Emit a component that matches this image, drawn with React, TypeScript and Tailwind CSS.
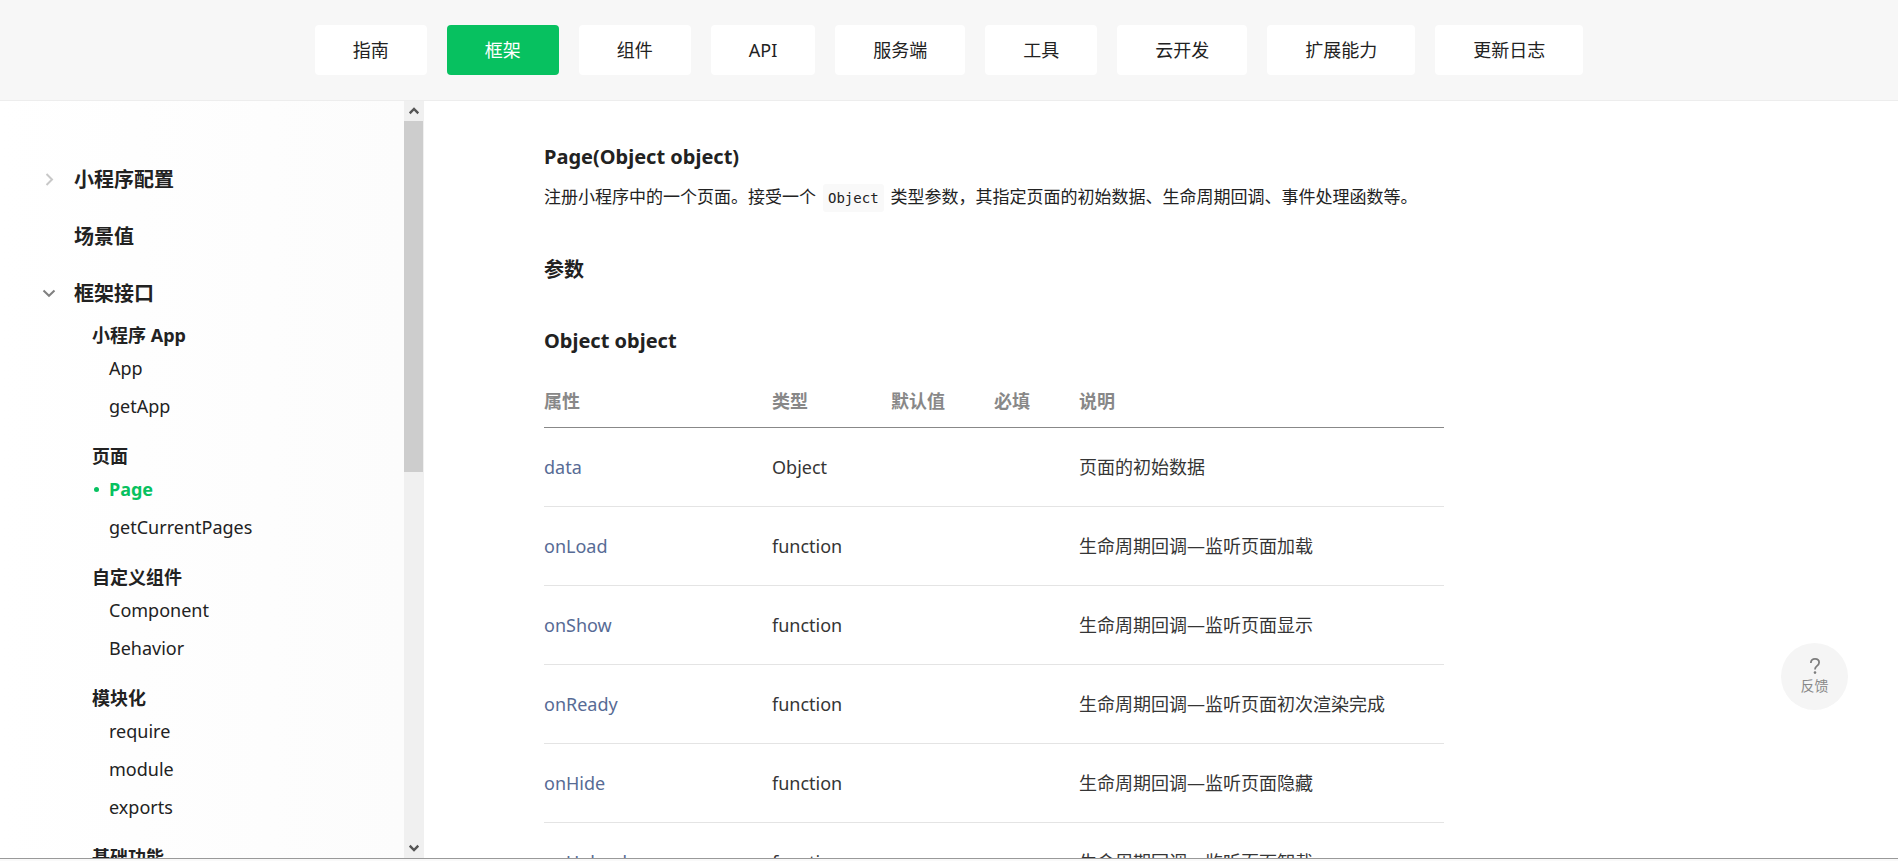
type NavGroup = { title: string; items: string[] };
type Row = { name: string; type: string; desc: string };

const tabs = ['指南', '框架', '组件', 'API', '服务端', '工具', '云开发', '扩展能力', '更新日志'];

const groups: NavGroup[] = [
  { title: '小程序 App', items: ['App', 'getApp'] },
  { title: '页面', items: ['Page', 'getCurrentPages'] },
  { title: '自定义组件', items: ['Component', 'Behavior'] },
  { title: '模块化', items: ['require', 'module', 'exports'] },
  { title: '基础功能', items: [] },
];

const rows: Row[] = [
  { name: 'data', type: 'Object', desc: '页面的初始数据' },
  { name: 'onLoad', type: 'function', desc: '生命周期回调—监听页面加载' },
  { name: 'onShow', type: 'function', desc: '生命周期回调—监听页面显示' },
  { name: 'onReady', type: 'function', desc: '生命周期回调—监听页面初次渲染完成' },
  { name: 'onHide', type: 'function', desc: '生命周期回调—监听页面隐藏' },
  { name: 'onUnload', type: 'function', desc: '生命周期回调—监听页面卸载' },
];

function Chevron({ open }: { open: boolean }) {
  return (
    <svg viewBox="0 0 14 14" className="size-[14px]" fill="none" strokeWidth="2" aria-hidden="true">
      {open ? (
        <path d="M1.500 3.500 7 8.800 12.500 3.500" stroke="#808080" />
      ) : (
        <path d="M4.500 1 10 6.500 4.500 12" stroke="#c8c8c8" />
      )}
    </svg>
  );
}

function ScrollArrow({ up }: { up: boolean }) {
  return (
    <span className="flex h-5 shrink-0 items-center justify-center">
      <svg viewBox="0 0 10 8" className="h-2 w-[10px]" fill="none" stroke="#555" strokeWidth="2.4" aria-hidden="true">
        <path d={up ? 'M.7 6.300 5 2l4.300 4.300' : 'M.7 1.700 5 6l4.300-4.300'} />
      </svg>
    </span>
  );
}

function Header() {
  return (
    <header className="shrink-0 border-b border-[#ededed] bg-[#f7f7f7] py-[25px]">
      <nav className="flex justify-center gap-5">
        {tabs.map((tab) => (
          <a
            key={tab}
            href="#"
            className={
              tab === '框架'
                ? 'rounded bg-[#07c160] px-[38px] leading-[50px] whitespace-nowrap text-white'
                : 'rounded bg-white px-[38px] leading-[50px] whitespace-nowrap'
            }
          >
            {tab}
          </a>
        ))}
      </nav>
    </header>
  );
}

function Section({ title, state }: { title: string; state?: 'open' | 'closed' }) {
  return (
    <div className="flex h-[57px] items-center pl-[42px]">
      <span className="w-8">{state && <Chevron open={state === 'open'} />}</span>
      <a href="#" className="text-xl font-bold">{title}</a>
    </div>
  );
}

function Sidebar() {
  return (
    <aside className="flex w-[424px] shrink-0">
      <nav className="min-w-0 flex-1 overflow-hidden bg-linear-to-r from-white to-[#fcfcfc] pt-[50px]">
        <Section title="小程序配置" state="closed" />
        <Section title="场景值" />
        <Section title="框架接口" state="open" />
        {groups.map((group) => (
          <div key={group.title} className="pb-[18px] pl-[92px]">
            <h3 className="leading-[27px] font-bold">{group.title}</h3>
            <ul>
              {group.items.map((item) => (
                <li key={item} className="flex items-center leading-[38px]">
                  <span className="flex w-[17px] pl-[2px]">
                    {item === 'Page' && <span className="size-[5px] rounded-full bg-[#07c160]" />}
                  </span>
                  <a href="#" className={item === 'Page' ? 'font-bold text-[#07c160]' : ''}>{item}</a>
                </li>
              ))}
            </ul>
          </div>
        ))}
      </nav>
      <div className="flex w-5 flex-col bg-[#f0f0f0]">
        <ScrollArrow up />
        <div className="flex-1 pr-px">
          <div className="h-[49%] bg-[#cdcdcd]" />
        </div>
        <ScrollArrow up={false} />
      </div>
    </aside>
  );
}

function Content() {
  return (
    <main className="min-w-0 flex-1 overflow-hidden pt-[41px] pl-[120px]">
      <div className="w-full max-w-[900px]">
        <h2 className="text-xl leading-[30px] font-bold">Page(Object object)</h2>
        <p className="mt-2 text-[17px] leading-[34px]">
          注册小程序中的一个页面。接受一个
          <code className="mx-[7px] rounded-[3px] bg-[#f9f9f9] px-[5px] py-[6px] font-['DejaVu_Sans_Mono',monospace] text-sm">Object</code>
          类型参数，其指定页面的初始数据、生命周期回调、事件处理函数等。
        </p>
        <h3 className="mt-[41px] text-xl leading-[30px] font-bold">参数</h3>
        <h3 className="mt-[41px] text-xl leading-[30px] font-bold">Object object</h3>
        <table className="mt-5 w-full table-fixed border-collapse text-left">
          <colgroup>
            <col className="w-[228px]" />
            <col className="w-[119px]" />
            <col className="w-[103px]" />
            <col className="w-[85px]" />
            <col />
          </colgroup>
          <thead>
            <tr className="h-[51px] border-b border-[#888] text-[#888]">
              <th className="font-bold">属性</th>
              <th className="font-bold">类型</th>
              <th className="font-bold">默认值</th>
              <th className="font-bold">必填</th>
              <th className="font-bold">说明</th>
            </tr>
          </thead>
          <tbody className="text-[#353535]">
            {rows.map((row) => (
              <tr key={row.name} className="h-[79px] border-b border-[#e4e4e4]">
                <td><a href="#" className="text-[#576b95]">{row.name}</a></td>
                <td>{row.type}</td>
                <td />
                <td />
                <td>{row.desc}</td>
              </tr>
            ))}
          </tbody>
        </table>
      </div>
    </main>
  );
}

export default function App() {
  return (
    <div className="flex h-screen flex-col overflow-hidden bg-white font-['Noto_Sans','Noto_Sans_CJK_SC',sans-serif] text-lg text-[#222]">
      <Header />
      <div className="flex min-h-0 flex-1">
        <Sidebar />
        <Content />
      </div>
      <footer className="h-[3px] shrink-0 border-t border-[#999] bg-[#f9f9f9]" />
      <button
        type="button"
        className="fixed right-[50px] bottom-[151px] flex size-[67px] flex-col items-center justify-center gap-[2px] rounded-full bg-[#f5f5f5] text-sm leading-5 text-[#888]"
      >
        <svg viewBox="0 0 10 16" className="h-4 w-[10px]" fill="none" stroke="#7d7d7d" strokeWidth="1.8" aria-hidden="true">
          <path d="M.9 5V4.600C.9 2.300 2.600.9 5 .9s4.100 1.400 4.100 3.600c0 1.700-.9 2.500-2.300 3.600C5.500 9.100 5 9.800 5 11.500" />
          <circle cx="5" cy="14.600" r="1.300" fill="#7d7d7d" stroke="none" />
        </svg>
        反馈
      </button>
    </div>
  );
}
